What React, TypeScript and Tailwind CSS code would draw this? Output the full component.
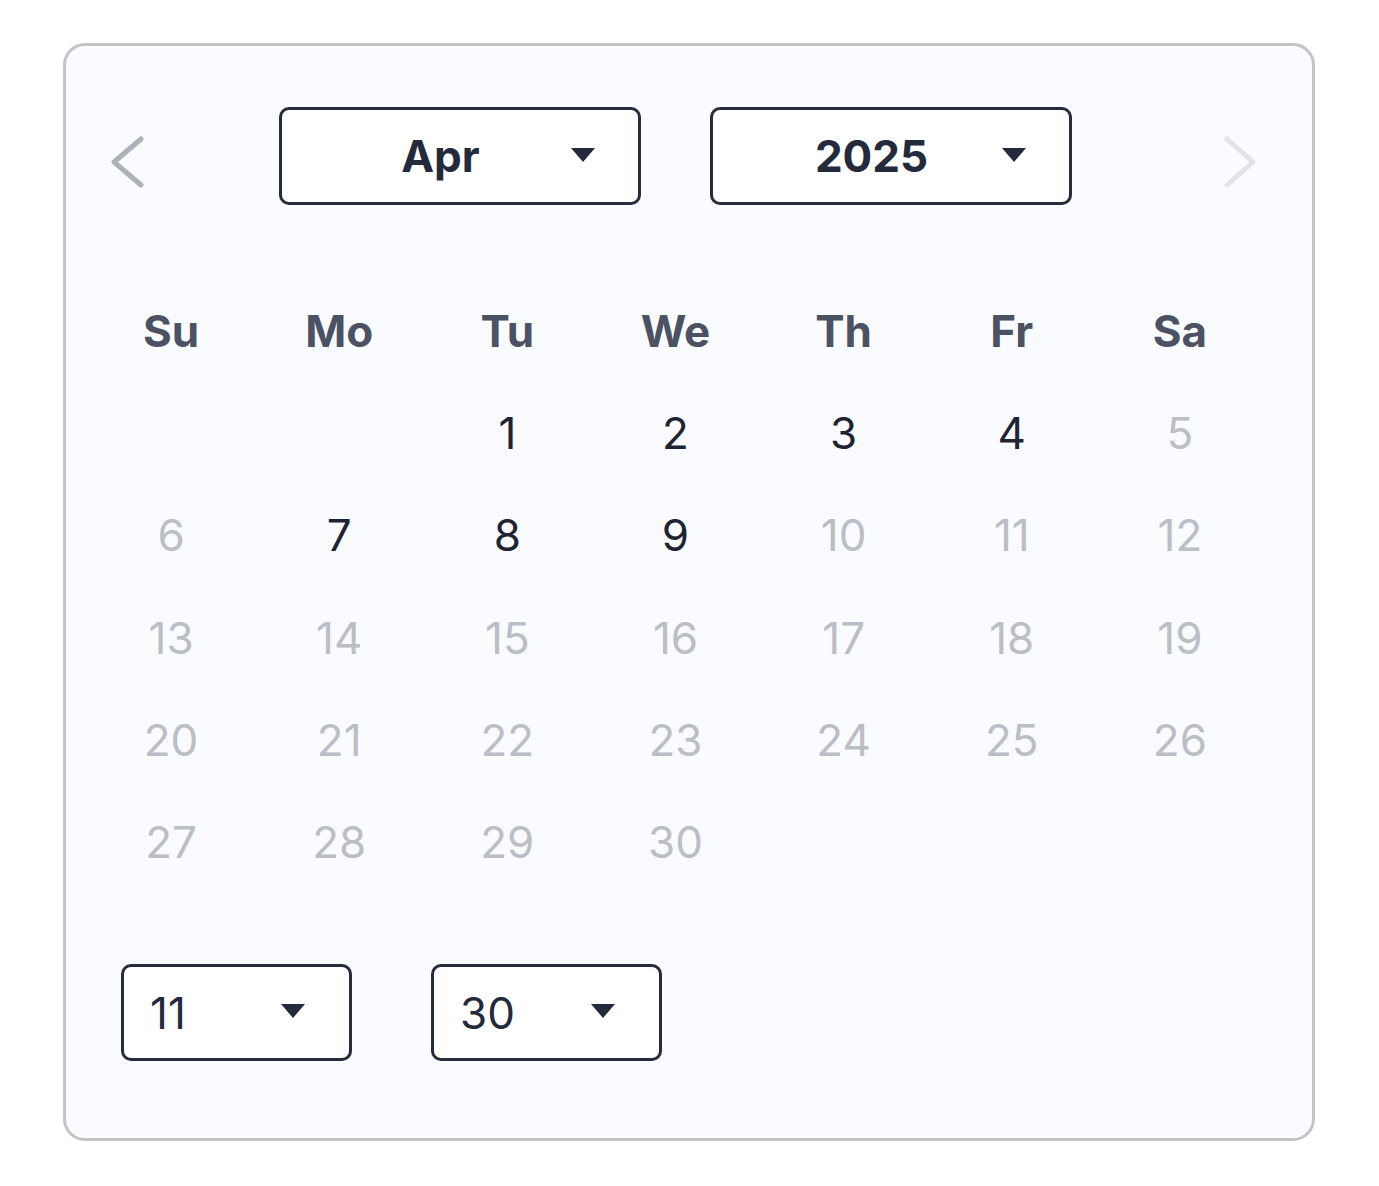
import React from 'react';

const weekdays = ['Su', 'Mo', 'Tu', 'We', 'Th', 'Fr', 'Sa'];

// April 2025 starts on a Tuesday; only 1-4 and 7-9 are selectable
const enabledDays = [1, 2, 3, 4, 7, 8, 9];

function Caret() {
  return (
    <svg width="26" height="16" viewBox="0 0 26 16" className="block">
      <path d="M1 1 L25 1 L13 15 Z" fill="#232a3b" />
    </svg>
  );
}

function HeaderSelect({ value }: { value: string }) {
  return (
    <div className="relative flex h-[98px] w-[362px] items-center justify-center rounded-[10px] border-[3px] border-[#262c3d] bg-white pr-[39px]">
      <span className="text-[44px] font-bold text-[#232a3b]">{value}</span>
      <span className="absolute right-[42px] top-[37px]">
        <Caret />
      </span>
    </div>
  );
}

function TimeSelect({ value }: { value: string }) {
  return (
    <div className="relative flex h-[97px] w-[231px] items-center rounded-[10px] border-[3px] border-[#262c3d] bg-white pl-[26px]">
      <span className="text-[44px] font-normal text-[#232a3b]">{value}</span>
      <span className="absolute right-[43px] top-[36px]">
        <Caret />
      </span>
    </div>
  );
}

export default function App() {
  const cells: (number | null)[] = [null, null];
  for (let d = 1; d <= 30; d++) cells.push(d);

  return (
    <div className="min-h-screen bg-white pt-[43px] pl-[63px]" style={{ fontFamily: 'Inter, "Noto Sans", sans-serif' }}>
      <div className="h-[1098px] w-[1252px] rounded-[22px] border-[3px] border-[#c3c4c8] bg-[#fafbfe] pl-[21px] pt-[61px]">
        <div className="w-[1177px]">
          <div className="flex items-start">
            <button className="ml-[23px] mt-[29px]">
              <svg width="34" height="52" viewBox="0 0 34 52" className="block">
                <path d="M31 3 L4 26 L31 49" fill="none" stroke="#adb1b9" strokeWidth="5" strokeLinecap="round" strokeLinejoin="round" />
              </svg>
            </button>
            <div className="ml-[135px]">
              <HeaderSelect value="Apr" />
            </div>
            <div className="ml-[69px]">
              <HeaderSelect value="2025" />
            </div>
            <button className="ml-[151px] mt-[29px]">
              <svg width="34" height="52" viewBox="0 0 34 52" className="block">
                <path d="M4 3 L30 26 L4 49" fill="none" stroke="#e1e3e7" strokeWidth="5" strokeLinecap="round" strokeLinejoin="round" />
              </svg>
            </button>
          </div>

          <div className="mt-[75px] grid grid-cols-7">
            {weekdays.map((w) => (
              <div key={w} className="flex h-[102px] items-center justify-center text-[44px] font-bold text-[#4b5263]">
                {w}
              </div>
            ))}
            {cells.map((d, i) => (
              <div
                key={i}
                className={
                  d !== null && enabledDays.includes(d)
                    ? 'flex h-[102.25px] items-center justify-center text-[44px] text-[#1f2433]'
                    : 'flex h-[102.25px] items-center justify-center text-[44px] text-[#babec7]'
                }
              >
                {d}
              </div>
            ))}
          </div>

          <div className="ml-[34px] mt-[71px] flex gap-[79px]">
            <TimeSelect value="11" />
            <TimeSelect value="30" />
          </div>
        </div>
      </div>
    </div>
  );
}
